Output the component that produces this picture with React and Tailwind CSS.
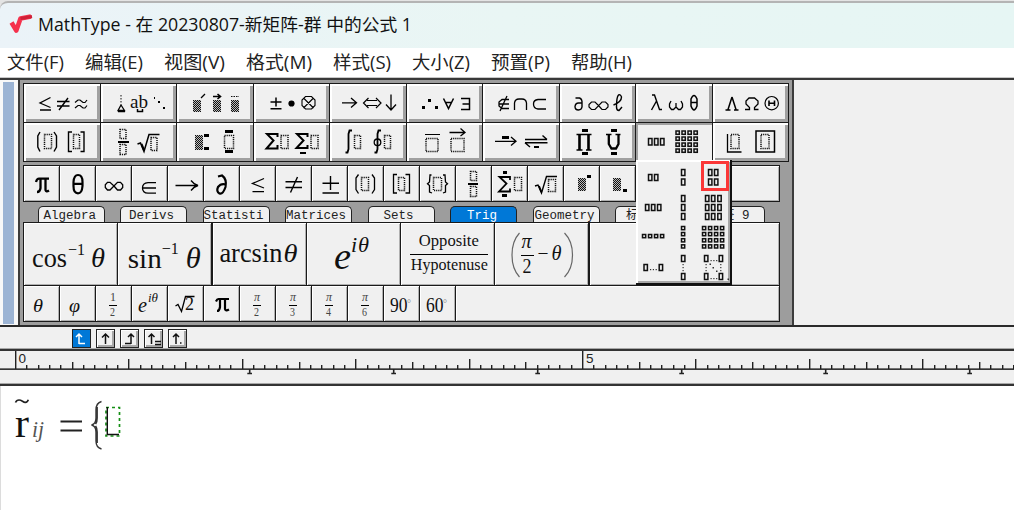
import React from "react";

const SERIF = '"Liberation Serif", "DejaVu Serif", serif';

/* ---------- drawing primitives for template glyphs ---------- */
const Slot = ({ x, y, w, h, color = "#111" }) => (
  <rect x={x + 0.5} y={y + 0.5} width={w} height={h} fill="none" stroke={color} strokeWidth="1.5" strokeDasharray="1.2 0.9" />
);
const Bar = ({ x, y, w, h = 1 }) => <rect x={x} y={y} width={w} height={h} fill="#000" shapeRendering="crispEdges" />;
const Box = ({ x, y, w = 3, h = 6 }) => (
  <rect x={x + 0.5} y={y + 0.5} width={w} height={h} fill="none" stroke="#111" strokeWidth="1.5" />
);
const Hatch = ({ x, y, w = 8, h = 12 }) => (
  <>
    <rect x={x} y={y} width={w} height={h} fill="#000" fillOpacity="0.22" />
    {Array.from({ length: h }, (_, r) => (
      <line key={r} x1={x + (r % 2)} x2={x + w} y1={y + r + 0.5} y2={y + r + 0.5} stroke="#111" strokeWidth="1" strokeDasharray="1 1" shapeRendering="crispEdges" />
    ))}
  </>
);
const P = ({ d, sw = 1.3, fill = "none" }) => <path d={d} fill={fill} stroke="#000" strokeWidth={sw} />;
const T = ({ x, y, s, w, it, b, color = "#111", font = SERIF, children }) => (
  <text x={x} y={y} fontSize={s} fontFamily={font} fontStyle={it ? "italic" : "normal"} fontWeight={b ? 700 : 400} fill={color} {...(w ? { textLength: w, lengthAdjust: "spacingAndGlyphs" } : {})}>
    {children}
  </text>
);
const Glyph = ({ x, y, w, h, children }) => (
  <svg className="block overflow-visible" width={w} height={h} viewBox={`${x} ${y} ${w} ${h}`}>
    {children}
  </svg>
);

/* ---------- symbol and template palettes ---------- */
const symbols = [
  <>
    <P d="M50.5 97.5L40 103L50.5 107.5M40 110H51" />
    <P d="M57 101.5H69.5M57 106H69.5M68 98L59 110" sw={1.4} />
    <P d="M75 102.5L78 100H80L83 102.5H85L87 100M75 108L78 105.5H80L83 108H85L87 105.5" sw={1.2} />
  </>,
  <>
    <path d="M120.5 95V105" stroke="#111" strokeDasharray="1.5 1.5" />
    <P d="M120.5 105L117.5 110.5H124L120.5 105M117.5 111.5H124.5" />
    <T x={129.5} y={108} s={19} w={18} b={false}>ab</T>
    <P d="M137 109V111.5H142V109" sw={1.5} />
    <Bar x={153} y={97} w={1.5} h={1.5} /><Bar x={157} y={101} w={2} h={2} /><Bar x={162} y={107} w={2} h={2} />
  </>,
  <>
    <Hatch x={193} y={100} /><P d="M201 98L205 94" />
    <Hatch x={213} y={100} /><P d="M213 96.5H220M217.5 94L220.5 96.5L217.5 99" sw={1.6} />
    <Hatch x={231} y={100} /><path d="M231 96.5H239" stroke="#111" strokeDasharray="1.5 1" />
  </>,
  <>
    <P d="M275.5 97.5V106.5M270 102H281M270 108.7H281" sw={1.5} />
    <circle cx="291" cy="103.5" r="3.1" />
    <P d="M305 96.5H311L314.5 100V105.5L311 109H305L301.5 105.5V100ZM303 98L313 108M313 98L303 108" sw={1.1} />
  </>,
  <>
    <P d="M342 102.8H356.5M351 98L356.5 102.8L351 107.6" />
    <P d="M367 100.5H377M367 105.5H377M368.5 98L363.5 103L368.5 108M376 98L381 103L376 108" sw={1.2} />
    <P d="M391 94.5V110M386 104.5L391 110L396 104.5" />
  </>,
  <>
    <Bar x={421} y={106} w={3} h={3} /><Bar x={427} y={99} w={3} h={3} /><Bar x={434} y={106} w={3} h={3} />
    <P d="M443 98.5L448 108.5L453 98.5M445 102.5H451" sw={1.5} />
    <P d="M460.5 98.5H469V109.5H460.5M462 104H469" sw={1.5} />
  </>,
  <>
    <P d="M509 99.5H502L499 102V106L502 108.5H509M499 104H509M507 96L500 111" sw={1.3} />
    <P d="M514.5 110V103Q515 99 519 99H522Q526 99 526.5 103V110" />
    <P d="M546 99.5H538Q533.5 100 533.5 104Q533.5 108.5 538 109H546" />
  </>,
  <>
    <P d="M575 98H579Q582 99 581.5 104V107Q581 110 578 110Q574.5 110 574.5 106.5Q575 103 578 103H581" sw={1.4} />
    <P d="M598 105.5L594.5 102H591L588.5 104.5V107L591 109.5H594.5L601.5 102H605L607.5 104.5V107L605 109.5H601.5Z" sw={1.2} />
    <P d="M613 105Q621 102 621 97Q620 94 618 95Q616 97 616 107Q616 110.5 618.5 110.5L621.5 107" sw={1.4} />
  </>,
  <>
    <P d="M652 95H654.5L659.5 109.5H662M656.5 101L651.5 110" sw={1.4} />
    <P d="M671 101L669.5 104V107L671.5 109.5H673.5L676 107V103V107L678.5 109.5H680.5L682.5 107V104L681 101" />
    <P d="M691 99Q694 92 697 99V106Q694 114 691 106ZM691 102.5H697" sw={1.5} />
  </>,
  <>
    <P d="M731.5 97L727.5 109.5M731.5 97L735.5 109.5M725 110H730M733.5 110H738" sw={1.5} />
    <P d="M744.5 109.5H749V107.5L745.5 104V101L748.5 98H754L757.5 101V104L754 107.5V109.5H758" sw={1.3} />
    <circle cx="771.2" cy="103.2" r="6.7" fill="none" stroke="#000" strokeWidth="1.2" />
    <P d="M768.5 100.5V106M774 100.5V106M768.5 103.2H774" sw={1.6} />
  </>,
];

const templates = [
  <>
    <P d="M40 132L37.8 136V147L40 151.5M54 132L56.5 136V147L54 151.5" sw={1.4} />
    <Slot x={44} y={134} w={7} h={14} />
    <P d="M72 132H68.5V151.5H72M80.5 132H84V151.5H80.5" sw={1.4} />
    <Slot x={73} y={134} w={6} h={14} />
  </>,
  <>
    <Slot x={119} y={129} w={6} h={9} /><Bar x={117} y={141} w={11} h={1.5} /><Slot x={119} y={144} w={6} h={10} />
    <P d="M137 144L140 143L143.5 151.5L148.5 134.5H159" sw={1.5} />
    <P d="M141 144L143.5 150" sw={2} />
    <Slot x={150} y={137} w={6} h={13} />
  </>,
  <>
    <Hatch x={195} y={135} h={15} /><Bar x={204} y={134} w={5} h={3} /><Bar x={204} y={147} w={5} h={3} />
    <Slot x={224} y={135} w={9} h={13} /><Bar x={225} y={130} w={8} h={3} /><Bar x={225} y={150} w={8} h={3} />
  </>,
  <>
    <P d="M277 137V134H266.5L273 140.5L266 148.5H277V145" sw={2} />
    <Slot x={280} y={135} w={7} h={13} />
    <P d="M307 137V134H296.5L303 140.5L296 148H307V145" sw={2} /><Bar x={299} y={152} w={6} h={2} />
    <Slot x={310} y={135} w={7} h={13} />
  </>,
  <>
    <P d="M352 130.5H349.5L348.5 134V149L347.5 152.5H345.5" sw={1.8} />
    <Slot x={354} y={135} w={6} h={13} />
    <P d="M381 130.5H378.5L377.5 134V149L376.5 152.5H374.5" sw={1.8} />
    <circle cx="377.5" cy="142.3" r="3.3" fill="none" stroke="#000" strokeWidth="1.3" />
    <Slot x={384} y={135} w={6} h={13} />
  </>,
  <>
    <Bar x={424} y={134} w={15} h={1.3} /><Slot x={425} y={138} w={12} h={13} />
    <P d="M449 132.5H464M460 128.5L464.5 132.5L460 136" sw={1.3} /><Slot x={450} y={138} w={13} h={13} />
  </>,
  <>
    <P d="M495 141.3H516M511 137L516 141.3L511 145.5" sw={1.3} /><Bar x={502} y={136} w={7} h={3} />
    <P d="M525 139.5H547M542.5 135.5L547 139.5M525 142.7H547.5M525 142.7L530 147" sw={1.4} /><Bar x={534} y={146} w={5} h={2} />
  </>,
  <>
    <P d="M576 134.5H591M576 150H582M585.5 150H591" sw={1.3} /><P d="M579 134.5V150M588 134.5V150" sw={2.6} />
    <Bar x={581} y={129} w={6} h={3} /><Bar x={581} y={152} w={6} h={3} />
    <P d="M605.5 134.5H611M615 134.5H620" sw={1.3} /><P d="M608.3 134.5V144L611 148.5H615.5L618 144V134.5" sw={2.3} />
    <Bar x={610} y={129} w={6} h={3} /><Bar x={610} y={152} w={6} h={3} />
  </>,
  <>
    {[648, 654, 660].map((x) => <Box key={x} x={x} y={138} w={3.5} h={6.5} />)}
    {[131, 137, 143, 149].map((y) => [675.5, 681.5, 687.5, 693.5].map((x) => <Box key={x + y} x={x} y={y - 0.5} w={3.3} h={3.3} />))}
  </>,
  <>
    <P d="M727 134V152H741" sw={1.3} /><Slot x={730} y={134} w={8} h={14} />
    <P d="M755.5 131H774V152H755.5Z" sw={1.5} /><Slot x={760} y={134} w={8} h={14} />
  </>,
];

const shortcuts = [
  <><P d="M36 182Q37 178.7 39 178.7H49M40.5 179V188Q40 192 37 192M45.5 179V190Q46 192.5 49 190.5" sw={2.3} /></>,
  <><P d="M73.5 182Q74 175 78 175Q82.5 175 82.5 182V186Q82 193.3 78 193.3Q73.5 193.3 73.5 186ZM73.5 183.8H82.5" sw={2.2} /></>,
  <><P d="M114 186L110 182.3H107.5L105.3 184.7V187.5L107.5 190H110L117.5 182.3H120.5L122.7 184.7V187.5L120.5 190H117.5Z" sw={1.3} /></>,
  <><P d="M156 182.7H148Q142.5 183 142.5 188Q142.5 193 148 193.2H156M142.5 188H156" sw={1.3} /></>,
  <><P d="M175.5 185.5H197M191 180.5Q194 184.5 198 185.5Q194 186.5 191 190.5" sw={1.3} /></>,
  <><P d="M218 176.5L222 175.5Q227 179 225.5 187Q223 194.5 219.5 193.5Q216 191.5 218 187Q221 183 226 184.5" sw={2.2} /></>,
  <><P d="M264 178.5L252.5 183.5L264 188M252.5 191.7H264" sw={1.3} /></>,
  <><P d="M285.5 181.8H302M285.5 187.5H302M297.5 177L290.5 192.5" sw={1.4} /></>,
  <><P d="M330.5 176V190M322.5 183.3H339M322.5 193H339" sw={1.4} /></>,
  <><P d="M358.5 174.5L356 178V189.5L358.5 193.5M372 174.5L374.5 178V189.5L372 193.5" sw={1.3} /><Slot x={361} y={177} w={7} h={13} /></>,
  <><P d="M397 174.5H393.5V193H397M405.5 174.5H409.5V193H405.5" sw={1.3} /><Slot x={398} y={177} w={6} h={13} /></>,
  <><P d="M431.5 175H430L429.5 182L427.5 183.7L429.5 185.5V192L432 193M443 175H445L445.5 182L447.5 183.7L445.5 185.5V192L443 193" sw={1.3} /><Slot x={433} y={177} w={8} h={13} /></>,
  <><Slot x={470} y={171} w={6} h={9} /><Bar x={468} y={183} w={10} h={1.5} /><Slot x={470} y={186} w={6} h={10} /></>,
  <><Bar x={503} y={171} w={4} h={3} /><P d="M510 180V177H499.5L506.5 183.5L499 191.5H510V188.5" sw={1.8} /><Bar x={502} y={194} w={5} h={3} /><Slot x={514} y={177} w={7} h={13} /></>,
  <><P d="M535 186L538 185L541.5 193L546.5 176.5H557" sw={1.4} /><P d="M539 186L541.5 192" sw={1.8} /><Slot x={548} y={179} w={7} h={12} /></>,
  <><Hatch x={578} y={178} w={8} h={13} /><Bar x={587} y={175} w={4} h={3} /></>,
  <><Hatch x={613} y={178} w={8} h={13} /><Bar x={623} y={189} w={4} h={3} /></>,
];

const tabs = [
  ["Algebra", "pl-[5px]"], ["Derivs", "pl-[8px]"], ["Statisti", "pl-0"], ["Matrices", "pl-0"],
  ["Sets", "pl-[15px]"], ["Trig", "pl-[16px]"], ["Geometry", "pl-[1px]"], ["标签 8", "pl-[10px]"], ["标签 9", "pl-[11px]"],
];

const expressions = [
  <>
    <T x={32} y={267} s={27} w={35}>cos</T><T x={68} y={255} s={17} w={17}>−1</T><T x={91} y={267} s={27} it w={14}>θ</T>
  </>,
  <>
    <T x={128} y={268} s={28} w={34}>sin</T><T x={162} y={254} s={17} w={17}>−1</T><T x={186} y={268} s={30} it w={15}>θ</T>
  </>,
  <><T x={219} y={261.5} s={27} w={63}>arcsin</T><T x={283} y={261.5} s={26} it w={14}>θ</T></>,
  <><T x={334} y={269} s={37} it w={17}>e</T><T x={351} y={252} s={22} it>i</T><T x={358} y={252} s={22} it w={11}>θ</T></>,
  <><T x={419} y={246} s={17.5} w={60}>Opposite</T><Bar x={410} y={254} w={78} /><T x={411} y={270} s={17.5} w={77}>Hypotenuse</T></>,
  <>
    <path d="M520 233Q512.5 241 512.5 255T520 277M565 233Q573 241 573 255T565 277" fill="none" stroke="#666" strokeWidth="1.2" />
    <T x={522} y={248} s={21} it w={10}>π</T><Bar x={521} y={255} w={13} /><T x={523} y={273} s={20} w={9}>2</T>
    <T x={538} y={260} s={19} w={11}>−</T><T x={552} y={260} s={20} it w={10}>θ</T>
  </>,
];

const Frac = ({ x, top, bottom, it }) => (
  <><T x={x + 1} y={301} s={12} it={it} w={6} color="#444">{top}</T><Bar x={x} y={305} w={8} h={1} /><T x={x + 1} y={315.5} s={11.5} w={5} color="#444">{bottom}</T></>
);
const snippets = [
  <T x={33} y={312} s={18} it w={10}>θ</T>,
  <T x={69} y={312} s={18} it w={11}>φ</T>,
  <Frac x={109} top="1" bottom="2" />,
  <><T x={138} y={312} s={22} it w={9}>e</T><T x={148} y={302} s={12} it w={10}>iθ</T></>,
  <><P d="M175.5 306L178 304.5L181.5 311.5L185.5 296.5H194.5" sw={1.3} /><T x={185} y={310} s={18}>2</T></>,
  <P d="M216 301.5Q217 299 218.5 299H229M220 299V307Q219.5 311 217 311M225 299V309Q225.5 311.5 229 309.5" sw={2.2} />,
  <Frac x={253} top="π" bottom="2" it />,
  <Frac x={289} top="π" bottom="3" it />,
  <Frac x={325} top="π" bottom="4" it />,
  <Frac x={361} top="π" bottom="6" it />,
  <><T x={390} y={312} s={20} w={17.5}>90</T><T x={407} y={307} s={10} color="#888">°</T></>,
  <><T x={426} y={312} s={20} w={17.5}>60</T><T x={443} y={307} s={10} color="#888">°</T></>,
];

const SMALL = "overflow-hidden bg-[#f0f0f0] shadow-[inset_1px_1px_0_#fff,inset_-1px_-1px_0_#b0b0b0]";
const LARGE = "bg-[#f0f0f0] shadow-[inset_2px_2px_0_#fff,inset_-3px_-3px_0_#a0a0a0]";
const PRESSED = "relative bg-[#f0f0f0] shadow-[inset_2px_2px_0_#a0a0a0]";

function MatrixMenu() {
  const tall = (xs, ys) => xs.map((x) => ys.map((y) => <Box key={x + "-" + y} x={x} y={y} w={3.4} h={6} />));
  const tiny = (xs, ys) => xs.map((x) => ys.map((y) => <Box key={x + "-" + y} x={x} y={y} w={3.2} h={3.2} />));
  return (
    <div className="absolute left-0 top-[37px] z-10 h-[125px] w-[96px] border-b-2 border-r-2 border-[#111] bg-[#f0f0f0] shadow-[inset_2px_2px_0_#fff,inset_-2px_-2px_0_#a8a8a8]">
      <Glyph x={636} y={160} w={94} h={123}>
        {tall([648, 654], [174])}{tall([681], [169, 178.5])}{tall([708, 714], [169, 178.5])}
        {tall([645, 651, 657], [204])}{tall([681], [195, 204, 213])}{tall([705, 711, 717.3], [195, 204, 213])}
        {tiny([642, 648, 654, 660], [234])}{tiny([681], [226, 232, 238.2, 244.3])}{tiny([702, 708, 714, 720], [226, 232, 238.2, 244.3])}
        {tall([643.5, 658.7], [264])}
        {tall([681], [255, 273])}{tall([704, 718.7], [255, 273])}
        <g fill="#333">
          {[650, 652.8, 655.6].map((x) => <rect key={x} x={x} y="269" width="1.2" height="1.2" />)}
          {[264, 267, 270].map((y) => [682.5, 705.5, 720.2].map((x) => <rect key={x + "-" + y} x={x} y={y} width="1.2" height="1.2" />))}
          {[260, 278].map((y) => [710.5, 713.3, 716.1].map((x) => <rect key={x + "-" + y} x={x} y={y} width="1.2" height="1.2" />))}
          {[[709.5, 263.5], [712.5, 267], [716, 270.5]].map(([x, y]) => <rect key={x} x={x} y={y} width="1.5" height="1.5" />)}
          <rect x="727.5" y="278.5" width="1.5" height="1.5" />
        </g>
        <rect x="702.5" y="162.5" width="25" height="27" fill="none" stroke="#fb3737" strokeWidth="3" />
      </Glyph>
    </div>
  );
}

function SymbolBar() {
  return (
    <div className="grid h-[79px] w-[766px] grid-cols-10 grid-rows-2 gap-px bg-[#1a1a1a] p-px">
      {symbols.map((g, i) => (
        <div key={"s" + i} className={LARGE}><Glyph x={24 + i * 76.5} y={84} w={75} h={38}>{g}</Glyph></div>
      ))}
      {templates.map((g, i) => (
        <div key={"t" + i} className={i === 8 ? PRESSED : LARGE}>
          <Glyph x={24 + i * 76.5} y={123} w={75} h={38}>{g}</Glyph>
          {i === 8 && <MatrixMenu />}
        </div>
      ))}
    </div>
  );
}

function Toolbar() {
  return (
    <div className="flex h-[247px] border-b-2 border-[#2a2a2a] bg-[#f0f0f0]">
      <div className="w-[18px] bg-[#f8f8f8] pl-[3px] pt-[2px] pb-[1px]">
        <div className="h-full w-[11px] bg-[#9cb4d4]" />
      </div>
      <div className="w-[776px] border-l-2 border-r-2 border-[#3c3c3c] bg-[#9d9d9d] pl-[3px] pt-[3px]">
        <SymbolBar />
        <div className="mt-[3px] flex h-[37px] w-[757px] gap-px bg-[#1a1a1a] p-px">
          {shortcuts.map((g, i) => (
            <div key={i} className={"w-[35px] shrink-0 " + SMALL}><Glyph x={24 + i * 36} y={166} w={35} h={35}>{g}</Glyph></div>
          ))}
          <div className={"flex-1 " + SMALL} />
        </div>
        <div className="flex h-[20px] items-end gap-[15.5px] pl-[14.5px]">
          {tabs.map(([name, pad], i) => (
            <div
              key={name}
              className={
                "h-[16px] w-[67px] overflow-hidden whitespace-nowrap rounded-t-[5px] border-l-[1.5px] border-r-[1.5px] border-t-[1.5px] border-[#222] pt-[2px] font-['Liberation_Mono','Noto_Sans_CJK_SC',monospace] text-[12.5px] leading-[15px] " +
                (i === 5 ? "bg-[#0078d7] text-white " : "bg-[#f0f0f0] text-[#222] ") + pad
              }
            >
              {name}
            </div>
          ))}
        </div>
        <div className="w-[757px] bg-[#1a1a1a] p-px">
          <div className="flex h-[62px] gap-[1.3px]">
            {expressions.map((g, i) => (
              <div key={i} className={"w-[93px] shrink-0 " + SMALL}><Glyph x={24 + i * 94.3} y={223} w={93} h={62}>{g}</Glyph></div>
            ))}
            <div className={"flex-1 " + SMALL} />
          </div>
          <div className="mt-px flex h-[35px] gap-px">
            {snippets.map((g, i) => (
              <div key={i} className={"w-[35px] shrink-0 " + SMALL}><Glyph x={24 + i * 36} y={286} w={35} h={35}>{g}</Glyph></div>
            ))}
            <div className={"flex-1 " + SMALL} />
          </div>
        </div>
      </div>
    </div>
  );
}

const tabStops = [
  "M7 15V5M4 8L7 5L10 8M7 14.5H13",
  "M9.5 15V5M6 8.5L9.5 5L13 8.5",
  "M11 15V5M8 8L11 5L14 8M5 14.5H11",
  "M7.5 15V5M4.5 8L7.5 5L10.5 8M11 12.5H17M11 15.5H17",
  "M8 15V5M5 8L8 5L11 8M12 14H13.5",
];

function Ruler() {
  const ticks = Array.from({ length: 89 }, (_, i) => ({ x: Math.round(15 + i * 11.34), i }));
  return (
    <svg className="block overflow-visible" width="1014" height="32" viewBox="0 352 1014 32">
      {ticks.map(({ x, i }) => {
        const top = i % 50 === 0 && i < 60 ? 352 : i % 10 === 0 ? 360 : i % 5 === 0 ? 363 : 366;
        return <rect key={i} x={x} y={top} width="1.4" height={370 - top} fill="#222" />;
      })}
      <rect x="0" y="369.4" width="1014" height="1.5" fill="#222" />
      {[249, 393, 537, 681, 825, 969].map((x) => <path key={x} d={`M${x + 0.7} 370V375M${x - 1.7} 374.5H${x + 3}`} stroke="#222" strokeWidth="1.6" />)}
      <text x="18.5" y="363.500" fontSize="13.5" fontFamily='"Liberation Sans", sans-serif' fill="#222">0</text>
      <text x="586" y="363.500" fontSize="13.5" fontFamily='"Liberation Sans", sans-serif' fill="#222">5</text>
    </svg>
  );
}

const menus = [["文件(F)", "w-[78px]"], ["编辑(E)", "w-[79px]"], ["视图(V)", "w-[82px]"], ["格式(M)", "w-[87px]"], ["样式(S)", "w-[79px]"], ["大小(Z)", "w-[79px]"], ["预置(P)", "w-[80px]"], ["帮助(H)", "w-[80px]"]];
const menuWidths = [57, 58, 61, 66, 58, 58, 59, 61];

export default function App() {
  return (
    <div className="h-[510px] w-[1014px] overflow-hidden bg-white">
      <div className="h-[48px] bg-[#e4e4e4] pt-[1px]">
        <div className="flex h-[47px] items-center rounded-tl-[8px] border-t-2 border-[#b4b4b4] bg-gradient-to-r from-[#ebf3f8] via-[#e9f6f4] to-[#e6f6f4] pl-[8px]">
          <svg className="mb-[4px]" width="26" height="24" viewBox="8 11 26 24">
            <path d="M11.500 21.500L16.300 29.500L20.500 17.500L31 15.500" fill="none" stroke="#f5314c" strokeWidth="4.6" strokeLinejoin="round" />
            <path d="M20.500 17.500L32 15.500" stroke="#cf2138" strokeWidth="3" />
          </svg>
          <svg className="mb-[1px] ml-[4px]" width="374" height="26" viewBox="38 12 374 26">
            <text x="38" y="30.5" fontSize="17.3" textLength="374" lengthAdjust="spacingAndGlyphs" fontFamily='"Open Sans","Noto Sans CJK SC",sans-serif' fill="#111">MathType - 在 20230807-新矩阵-群 中的公式 1</text>
          </svg>
        </div>
      </div>
      <div className="flex h-[29px] pl-[7px]">
        {menus.map(([m, w], i) => (
          <div key={m} className={w}>
            <svg className="block overflow-visible" width="70" height="29">
              <text x="0" y="21" fontSize="18" textLength={menuWidths[i]} lengthAdjust="spacingAndGlyphs" fontFamily='"Open Sans","Noto Sans CJK SC",sans-serif' fill="#222">{m}</text>
            </svg>
          </div>
        ))}
      </div>
      <div className="h-[3px] border-t border-[#c8c8c8] bg-[#383838]" />
      <Toolbar />
      <div className="flex h-[21px] gap-[5px] bg-[#f0f0f0] pl-[72px] pt-[2px]">
        {tabStops.map((d, i) => (
          <div key={i} className={"h-[19px] w-[19px] border-[1.5px] border-[#222] " + (i === 0 ? "bg-[#0078d7]" : "bg-[#f0f0f0] shadow-[inset_1px_1px_0_#fff,inset_-2px_-2px_0_#a8a8a8]")}>
            <svg className="-ml-px -mt-px block" width="19" height="19"><path d={d} fill="none" stroke={i === 0 ? "#fff" : "#111"} strokeWidth="1.5" /></svg>
          </div>
        ))}
      </div>
      <div className="h-[3px] border-t border-[#a8a8a8] bg-[#333]" />
      <div className="h-[32px] bg-[#f0f0f0]"><Ruler /></div>
      <div className="h-[3px] border-t border-[#a8a8a8] bg-[#333]" />
      <div className="h-[124px] border-l border-[#dcdcdc] bg-white">
        <svg className="block" width="400" height="120" viewBox="1 386 400 120">
          <path d="M15.500 402.500Q16.500 400 19 400Q20.500 400 22.500 401.300T25.500 402.300Q27.500 402.300 28.300 399.800" fill="none" stroke="#222" strokeWidth="1.7" />
          <T x={15} y={437} s={39} w={14}>r</T>
          <T x={32} y={437} s={24} it w={12} color="#555">ij</T>
          <path d="M60.5 421.5H82M60.5 430.5H82" stroke="#222" strokeWidth="2" />
          <path d="M101.5 401.5Q96 403 96 410V418Q96 424 91.5 425Q96 426 96 432V441Q96 447.500 101.5 449" fill="none" stroke="#333" strokeWidth="1.4" />
          <path d="M97 407V418Q97 422 95.500 424M95.500 426Q97 428 97 432V443" fill="none" stroke="#333" strokeWidth="1.8" />
          <rect x="106" y="407.500" width="13.500" height="28.500" fill="none" stroke="#169016" strokeWidth="1.7" strokeDasharray="3 3" />
          <path d="M107.300 407V434.500H119" fill="none" stroke="#111" strokeWidth="1.4" />
        </svg>
      </div>
    </div>
  );
}
